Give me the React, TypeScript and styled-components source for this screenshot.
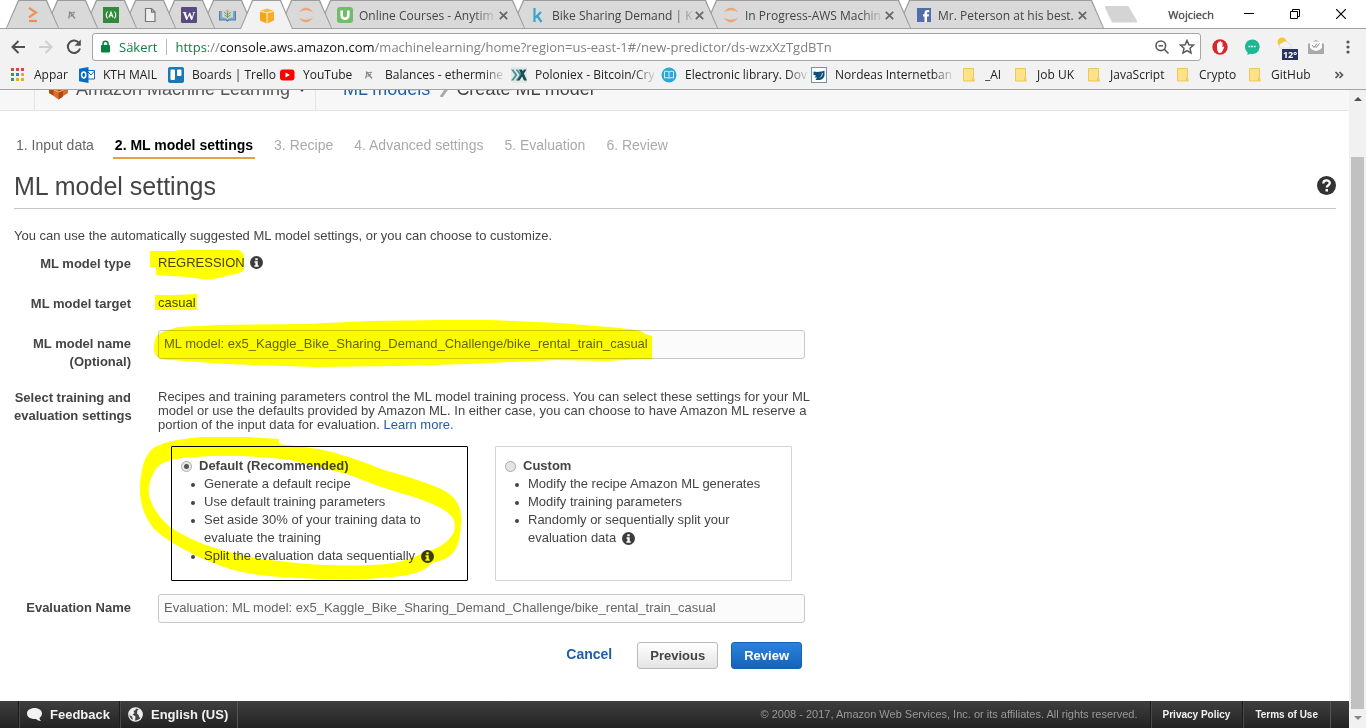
import React from "react";
import styled, { createGlobalStyle, css } from "styled-components";

const uiFont = `"Open Sans", "Noto Sans", sans-serif`;
const pageFont = `"Liberation Sans", Arial, sans-serif`;

const GlobalStyle = createGlobalStyle`
  * { box-sizing: border-box; }
  body { margin: 0; background: #fff; font-family: ${pageFont}; font-size: 13px; color: #444; }
  button { font: inherit; border: 0; background: none; padding: 0; cursor: pointer; }
  h1, p, ul { margin: 0; padding: 0; font-weight: normal; }
  svg { display: block; flex: none; }
`;

const Shell = styled.div`
  min-height: 100vh;
  display: flex;
  flex-direction: column;
`;

/* ---------- browser window ---------- */

const TabStrip = styled.div`
  display: flex;
  height: 29px;
  padding-left: 6px;
  border-bottom: 1px solid #a0a0a0;
  background: #fff;
  font-family: ${uiFont};
  font-size: 12px;
`;

const tabShape = (top: number) => css`
  clip-path: polygon(0 100%, 12px ${top}px, calc(100% - 12px) ${top}px, 100% 100%);
`;

const Tab = styled.div<{ $wide?: boolean; $active?: boolean; $order: number }>`
  position: relative;
  isolation: isolate;
  display: flex;
  align-items: center;
  justify-content: ${(p) => (p.$wide ? "flex-start" : "center")};
  gap: 2px;
  flex: none;
  width: ${(p) => (p.$wide ? 207 : 53)}px;
  height: ${(p) => (p.$active ? 29 : 28)}px;
  margin-right: -14px;
  padding: ${(p) => (p.$wide ? "2px 17px 0 19px" : "2px 0 0")};
  z-index: ${(p) => (p.$active ? 50 : 40 - p.$order)};
  color: #444;
  &::before {
    content: "";
    position: absolute;
    inset: 0;
    z-index: -2;
    background: #9c9c9c;
    ${tabShape(0)}
  }
  &::after {
    content: "";
    position: absolute;
    inset: 0 1px;
    z-index: -1;
    background: ${(p) => (p.$active ? "#f2f2f2" : "#d9d9d9")};
    ${tabShape(1)}
  }
`;

const Fade = styled.span<{ $on?: boolean }>`
  white-space: nowrap;
  ${(p) =>
    p.$on !== false &&
    css`
      mask-image: linear-gradient(to right, #000 calc(100% - 20px), rgba(0, 0, 0, 0.15));
    `}
`;

const TabTitle = styled(Fade)`
  margin-left: 4px;
`;

const IconButton = styled.button`
  display: flex;
  align-items: center;
  justify-content: center;
  flex: none;
`;

const CloseTab = styled(IconButton)`
  margin-left: auto;
`;

const NewTab = styled.button`
  align-self: center;
  width: 34px;
  height: 17px;
  margin-left: 14px;
  border-radius: 3px;
  background: #d4d4d4;
  clip-path: polygon(0 0, 24px 0, 100% 100%, 8px 100%);
`;

const WindowControls = styled.div`
  display: flex;
  align-items: center;
  margin-left: auto;
  padding-right: 2px;
`;

const UserName = styled.span`
  margin-right: 12px;
  font-size: 11px;
  color: #555;
  text-shadow: 0 0 1px #333;
`;

const ControlButton = styled(IconButton)`
  width: 46px;
  height: 27px;
`;

const Toolbar = styled.div`
  display: flex;
  align-items: center;
  height: 36px;
  padding: 4px 0 4px 9px;
  background: #f2f2f2;
  font-family: ${uiFont};
`;

const NavButtons = styled.div`
  display: flex;
  gap: 10px;
  margin-right: 9px;
`;

const Omnibox = styled.div`
  display: flex;
  align-items: center;
  flex: 1;
  height: 28px;
  padding: 0 4px 0 7px;
  border: 1px solid #a6a6a6;
  border-radius: 3px;
  background: #fff;
  font-size: 13px;
  white-space: nowrap;
`;

const Secure = styled.span`
  padding: 0 9px 0 8px;
  color: #0b8043;
  border-right: 1px solid #bbb;
  line-height: 16px;
`;

const Url = styled.span`
  flex: 1;
  padding-left: 8px;
  color: #808080;
  em { font-style: normal; color: #0b8043; }
  b { font-weight: normal; color: #111; }
`;

const Extensions = styled.div<{ $gap: number }>`
  display: flex;
  align-items: center;
  gap: ${(p) => p.$gap}px;
`;

const ExtensionBar = styled(Extensions)`
  padding: 0 14px 0 11px;
`;

const BookmarkBar = styled.nav`
  display: flex;
  align-items: center;
  height: 25px;
  padding-left: 10px;
  padding-right: 22px;
  padding-bottom: 5px;
  background: #f2f2f2;
  border-bottom: 1px solid #a3a3a3;
  font-family: ${uiFont};
  font-size: 12px;
`;

const Bookmark = styled.a<{ $width: number }>`
  display: flex;
  align-items: center;
  gap: 8px;
  flex: none;
  width: ${(p) => p.$width}px;
  color: #222;
  text-decoration: none;
  line-height: 18px;
`;

const More = styled.button`
  display: flex;
  margin-left: auto;
`;

/* ---------- page ---------- */

const Viewport = styled.div`
  display: flex;
  flex: 1;
`;

const Page = styled.div`
  display: flex;
  flex-direction: column;
  flex: 1;
  min-width: 0;
`;

const Scrollbar = styled.div`
  display: flex;
  flex-direction: column;
  align-items: center;
  width: 17px;
  padding: 5px 0 7px;
  background: #f1f1f1;
`;

const Thumb = styled.div`
  flex: 1;
  width: 13px;
  margin: 54px 0 7px;
  background: #c1c1c1;
`;

const ServiceBar = styled.header`
  display: flex;
  align-items: flex-end;
  height: 21px;
  overflow: hidden;
  background: #f7f7f7;
  border-bottom: 1px solid #e4e4e4;
  font-size: 18px;
  line-height: 42px;
`;

const Service = styled.div`
  display: flex;
  align-items: center;
  gap: 8px;
  width: 282px;
  height: 42px;
  margin-left: 34px;
  padding-left: 14px;
  border: solid #e4e4e4;
  border-width: 0 1px;
  color: #555;
  white-space: nowrap;
`;

const Crumbs = styled.div`
  display: flex;
  align-items: center;
  gap: 7px;
  height: 42px;
  padding-left: 27px;
  a { color: #1f5fa8; text-decoration: none; }
`;

const Main = styled.main`
  flex: 1;
  padding: 25px 13px 32px 14px;
`;

const Steps = styled.ol`
  display: flex;
  gap: 17px;
  margin: 0;
  padding: 0;
  list-style: none;
  font-size: 14px;
`;

const Step = styled.li<{ $state?: "done" | "current" }>`
  height: 23px;
  padding: 0 2px 5px;
  line-height: 18px;
  white-space: nowrap;
  color: ${(p) => (p.$state === "current" ? "#000" : p.$state === "done" ? "#666" : "#aaa")};
  font-weight: ${(p) => (p.$state === "current" ? "bold" : "normal")};
  border-bottom: 2px solid ${(p) => (p.$state === "current" ? "#e2a33a" : "transparent")};
`;

const TitleRow = styled.div`
  display: flex;
  align-items: center;
  justify-content: space-between;
  height: 50px;
  padding-top: 4px;
  border-bottom: 1px solid #c6c6c6;
  margin-bottom: 18px;
  h1 { font-size: 25px; line-height: 30px; }
`;

const Intro = styled.p`
  line-height: 18px;
  margin-bottom: 5px;
`;

const Row = styled.div<{ $space?: number }>`
  display: grid;
  grid-template-columns: 117px minmax(0, 647px);
  column-gap: 27px;
  margin-bottom: ${(p) => p.$space ?? 17}px;
`;

const Label = styled.label`
  padding-top: 5px;
  line-height: 18px;
  font-weight: bold;
  text-align: right;
  white-space: nowrap;
`;

const Value = styled.div`
  position: relative;
`;

const Plain = styled.div`
  display: flex;
  align-items: center;
  gap: 5px;
  height: 22px;
  padding-top: 3px;
`;

const TextInput = styled.input`
  display: block;
  width: 100%;
  height: 29px;
  padding: 0 5px 2px;
  border: 1px solid #c8c8c8;
  border-radius: 3px;
  background: #fbfbfb;
  font: 13px ${pageFont};
  color: #666;
`;

const Description = styled.p`
  padding-top: 6px;
  margin-bottom: 14px;
  line-height: 14px;
  white-space: nowrap;
  a { color: #1f5fa8; text-decoration: none; }
`;

const Cards = styled.div`
  display: grid;
  grid-template-columns: 1fr 1fr;
  gap: 27px;
  padding: 0 13px;
`;

const Card = styled.div<{ $selected?: boolean }>`
  min-height: 135px;
  padding: 10px 9px 9px;
  border: 1px solid ${(p) => (p.$selected ? "#000" : "#d5d5d5")};
  border-radius: 1px;
  line-height: 18px;
`;

const Option = styled.label`
  display: flex;
  align-items: center;
  gap: 7px;
  font-weight: bold;
`;

const Radio = styled.input`
  appearance: none;
  width: 11px;
  height: 11px;
  margin: 0;
  border: 1px solid #aaa;
  border-radius: 50%;
  background: #e4e4e4;
  &:checked {
    background: radial-gradient(circle, #555 0 2px, #e8e8e8 3px);
  }
`;

const Points = styled.ul`
  padding-left: 23px;
  list-style: none;
  li { position: relative; padding-right: 20px; }
  li::before {
    content: "";
    position: absolute;
    left: -13px;
    top: 8px;
    width: 4px;
    height: 4px;
    border-radius: 50%;
    background: #444;
  }
  svg { display: inline-block; vertical-align: -3px; margin-left: 2px; }
`;

const Actions = styled.div`
  display: flex;
  align-items: center;
  justify-content: flex-end;
  max-width: 788px;
  gap: 13px;
  font-weight: bold;
`;

const Cancel = styled.button`
  margin-right: 12px;
  padding-bottom: 3px;
  font-size: 14px;
  font-weight: bold;
  color: #1f5fa8;
`;

const Button = styled.button<{ $primary?: boolean }>`
  height: 27px;
  padding: 0 12px;
  font-weight: bold;
  border: 1px solid ${(p) => (p.$primary ? "#1762b0" : "#b9b9b9")};
  border-radius: 3px;
  color: ${(p) => (p.$primary ? "#fff" : "#444")};
  background: ${(p) =>
    p.$primary
      ? "linear-gradient(#2a83db, #1663b8)"
      : "linear-gradient(#ffffff, #e4e4e4)"};
`;

const Footer = styled.footer`
  display: flex;
  align-items: stretch;
  height: 27px;
  padding: 0 18px;
  background: linear-gradient(#3f3f3f, #222);
  color: #999;
  font-size: 11px;
  line-height: 26px;
`;

const FooterItem = styled.a<{ $small?: boolean }>`
  display: flex;
  align-items: center;
  gap: 8px;
  padding: ${(p) => (p.$small ? "0 12px" : "0 9px 0 8px")};
  border-left: 1px solid #1c1c1c;
  box-shadow: inset 1px 0 #4a4a4a;
  color: #f2f2f2;
  font-size: ${(p) => (p.$small ? 10 : 13)}px;
  font-weight: bold;
  text-decoration: none;
  white-space: nowrap;
  &:last-child { border-right: 1px solid #555; }
`;

const FooterGroup = styled.div`
  display: flex;
`;

const Copyright = styled.span`
  margin-left: auto;
  padding-right: 12px;
  white-space: nowrap;
`;

/* Marker strokes painted over the form; text stays readable through them. */
const Marker = styled.svg<{ $x: number; $y: number }>`
  position: absolute;
  left: ${(p) => p.$x}px;
  top: ${(p) => p.$y}px;
  mix-blend-mode: multiply;
  pointer-events: none;
`;

/* ---------- icons ---------- */

const Info = ({ size = 13 }: { size?: number }) => (
  <svg width={size} height={size} viewBox="0 0 13 13">
    <circle cx="6.5" cy="6.5" r="6.5" fill="#3c3c3c" />
    <path d="M5.3 2.3h2.4v2H5.3zM4.5 5.3h3.2v4h1v1.4H4.4V9.300h1V6.700h-.9z" fill="#fff" />
  </svg>
);

const Close = () => (
  <svg width="9" height="9" viewBox="0 0 9 9" stroke="#666" strokeWidth="1.7">
    <path d="M.8.8l7.400 7.400M8.200.8L.8 8.200" />
  </svg>
);

const Swirl = () => (
  <svg width="16" height="16" viewBox="0 0 16 16" fill="#f0a274">
    <path d="M1 5.500C4-.8 12-.8 15 5.500 11 2.600 5 2.600 1 5.500zM1 10.500c3 6.300 11 6.300 14 0-4 2.900-10 2.900-14 0z" />
  </svg>
);

const Pick = () => (
  <svg width="16" height="16" viewBox="0 0 16 16" fill="none" stroke="#8b8b8b">
    <path d="M4.500 11.500q1.500-3 1-6.500 3 1.500 5.500 0" strokeWidth="1.200" />
    <path d="M6 5.500l5 6M6.500 9.500L10 7" strokeWidth="1.400" />
  </svg>
);

const Letter = ({ bg, fg, ch, font = "Liberation Sans", size = 13, round = 1 }: { bg: string; fg: string; ch: string; font?: string; size?: number; round?: number }) => (
  <svg width="16" height="16" viewBox="0 0 16 16">
    <rect width="16" height="16" rx={round} fill={bg} />
    <text x="8" y="12.500" textAnchor="middle" fontFamily={font} fontWeight="bold" fontSize={size} fill={fg}>{ch}</text>
  </svg>
);

const Chevron = () => (
  <svg width="16" height="16" viewBox="0 0 16 16" fill="none" stroke="#ee9056" strokeWidth="2.200">
    <path d="M4 1l7 4.500-7 4.800" /><path d="M4 14h8" />
  </svg>
);

const GreenA = () => (
  <svg width="16" height="16" viewBox="0 0 16 16">
    <rect width="16" height="16" fill="#2f8a3b" />
    <g fill="none" stroke="#fff" strokeWidth="1.100">
      <path d="M4.500 4.500Q2 8 4.500 11.500M11.500 4.500Q14 8 11.500 11.500M6 10.500l2-5.500 2 5.500M6.700 8.800h2.600" />
    </g>
  </svg>
);

const Doc = () => (
  <svg width="16" height="16" viewBox="0 0 16 16" fill="#eee" stroke="#777" strokeWidth="1.200">
    <path d="M3.500 1.500h6l3.500 3.500v9.500h-9.500zM9.500 1.500v3.700H13" />
  </svg>
);

const Book = () => (
  <svg width="17" height="14" viewBox="0 0 17 14">
    <path d="M.5 3v9h6.500l1.500 1 1.500-1h6.500V3" fill="#7fa8c6" stroke="#4d83ac" strokeWidth="1.200" />
    <path d="M3 1.500c3 0 5 1 5.500 3v7c-1-1.500-3-2-5.500-2zM14 1.500c-3 0-5 1-5.500 3v7c1-1.500 3-2 5.500-2z" fill="#d3d3c6" />
    <path d="M8.500 10V4M8.500 7L5 4M8.500 7L12 4M8.500 9L5.500 7M8.500 9L11.500 7" stroke="#6d9a82" fill="none" />
    <circle cx="8.500" cy="3" r="1.200" fill="#d9a566" />
  </svg>
);

const Cube = ({ size = 16 }: { size?: number }) => (
  <svg width={size} height={size} viewBox="0 0 16 16">
    <path d="M1 3.500v9l6.700 3V5z" fill="#f3a61c" />
    <path d="M15 3.500v9l-6.700 3V5z" fill="#f5ae2a" />
    <path d="M1.300 2.800L8 .6l6.700 2.200L8 4.600z" fill="#f9bb3a" />
    <path d="M1 3.300l7 1.800 7-1.800M8 5v10.500" fill="none" stroke="#fde3a6" strokeWidth=".8" />
  </svg>
);

const MLCube = () => (
  <svg width="19" height="22" viewBox="0 0 19 22">
    <path d="M0 5l6-3 3.500 1.500L13 2l6 3v10l-4 2.500-5.500 4-5.500-4L0 15z" fill="#d86e2b" />
    <path d="M0 5l4.500 2v10.500L0 15zM9.500 10l4.500-2v10.500l-4.500 3z" fill="#a8491b" />
    <path d="M5 12l4.500 2 5-2M2 9l3 1M14 9l3-1" stroke="#f4b183" fill="none" />
  </svg>
);

const Kaggle = () => (
  <svg width="16" height="16" viewBox="0 0 16 16" fill="none" stroke="#3ba3cf" strokeWidth="2.200">
    <path d="M4.500 1v14M11 5l-5.500 5.500M7 8.500l4.500 6.500" />
  </svg>
);

const Udemy = () => (
  <svg width="16" height="16" viewBox="0 0 16 16">
    <rect width="16" height="16" rx="3" fill="#70bd69" />
    <path d="M4.700 3.500v5a3.300 3.300 0 006.600 0v-5" fill="none" stroke="#fff" strokeWidth="2.600" />
  </svg>
);

const Facebook = () => (
  <svg width="16" height="16" viewBox="0 0 16 16">
    <rect x="1" y="1" width="14" height="14" fill="#536da8" />
    <path d="M8.500 15V9.500H7V7.300h1.500V6c0-2 1-3 3-3h1.700v2.200H12c-.8 0-1 .3-1 1v1.100h2l-.3 2.200H11V15z" fill="#fff" />
  </svg>
);

const Folder = () => (
  <svg width="16" height="16" viewBox="0 0 16 16">
    <path d="M2.500 1.500h10v9l1 3.500h-11z" fill="#fde28a" stroke="#ecc75a" />
    <path d="M12 10l-1 4" stroke="#ecc75a" />
  </svg>
);

const Apps = () => (
  <svg width="16" height="16" viewBox="0 0 16 16">
    {["#d9483b", "#d9483b", "#d9483b", "#3b9a4f", "#3b78d8", "#e8a92b", "#3b9a4f", "#e8a92b", "#e8a92b"].map((c, i) => (
      <rect key={i} x={1 + (i % 3) * 5} y={1 + Math.floor(i / 3) * 5} width="3" height="3" fill={c} />
    ))}
  </svg>
);

const Outlook = () => (
  <svg width="16" height="16" viewBox="0 0 16 16">
    <path d="M8 3.500h7.500v8.500H8z" fill="#fff" stroke="#0a6cbc" />
    <path d="M8 4l4 4 3.500-4" fill="none" stroke="#0a6cbc" />
    <path d="M0 1.800L9.500 0v16L0 14.200z" fill="#0a6cbc" />
    <ellipse cx="4.700" cy="8" rx="2.100" ry="2.900" fill="none" stroke="#fff" strokeWidth="1.500" />
  </svg>
);

const Trello = () => (
  <svg width="16" height="16" viewBox="0 0 16 16">
    <rect width="16" height="16" rx="2" fill="#1779b5" />
    <rect x="2.500" y="2.500" width="4.500" height="10.500" rx="1" fill="#fff" />
    <rect x="9" y="2.500" width="4.500" height="6.500" rx="1" fill="#fff" />
  </svg>
);

const YouTube = () => (
  <svg width="16" height="16" viewBox="0 0 16 16">
    <rect x="1" y="2.500" width="14.500" height="11" rx="3" fill="#f00" />
    <path d="M6.500 5.500v5l4.500-2.500z" fill="#fff" />
  </svg>
);

const Poloniex = () => (
  <svg width="16" height="16" viewBox="0 0 16 16">
    <rect width="16" height="16" fill="#e3e8e8" />
    <path d="M0 2.500h2.500l4 5.500-4 5.500H0L4 8zM4.500 2.500H7L11 8l-4 5.500H4.500L8.500 8z" fill="#4c9a94" />
    <path d="M8 2.500h3l5 11h-3zM13 2.500h2.500L8.500 13.500H6z" fill="#174f55" />
  </svg>
);

const Library = () => (
  <svg width="16" height="16" viewBox="0 0 16 16">
    <circle cx="8" cy="8" r="7.500" fill="#2ca7d8" />
    <path d="M3.500 4.500c2-.5 3.500-.3 4.500.5 1-.8 2.500-1 4.500-.5v6.500c-2-.5-3.500-.3-4.500.3-1-.6-2.500-.8-4.500-.3zM8 5v6" fill="none" stroke="#d8f1fa" />
  </svg>
);

const Nordea = () => (
  <svg width="16" height="16" viewBox="0 0 16 16">
    <rect x=".5" y=".5" width="15" height="15" fill="#fff" stroke="#6b93aa" />
    <path d="M2.500 4.500c3 .8 8 .5 11-1v5.500q-2 4-5 4H4.500l1.500-2.500H3.500L5 8.500 2.500 8z" fill="#0f4f7c" />
    <path d="M9 10.500q2-1 2.500-4.500" stroke="#fff" fill="none" strokeWidth=".8" />
  </svg>
);

/* ---------- content ---------- */

const smallTabs = [
  { name: "Console", icon: <Chevron /> },
  { name: "Ethermine", icon: <Pick /> },
  { name: "Academy", icon: <GreenA /> },
  { name: "Document", icon: <Doc /> },
  { name: "Wikipedia", icon: <Letter bg="#5b4a80" fg="#fff" ch="W" font="Liberation Serif" /> },
  { name: "Library", icon: <Book /> },
  { name: "AWS", icon: <Cube />, active: true },
  { name: "Jupyter", icon: <Swirl /> },
];

const wideTabs = [
  { title: "Online Courses - Anytim", icon: <Udemy />, fade: true },
  { title: "Bike Sharing Demand | K", icon: <Kaggle />, fade: true },
  { title: "In Progress-AWS Machin", icon: <Swirl />, fade: true },
  { title: "Mr. Peterson at his best.", icon: <Facebook />, fade: false },
];

const bookmarks = [
  { label: "Appar", icon: <Apps />, width: 69 },
  { label: "KTH MAIL", icon: <Outlook />, width: 89 },
  { label: "Boards | Trello", icon: <Trello />, width: 111 },
  { label: "YouTube", icon: <YouTube />, width: 82 },
  { label: "Balances - ethermine", icon: <Pick />, width: 150, fade: true },
  { label: "Poloniex - Bitcoin/Cry", icon: <Poloniex />, width: 150, fade: true },
  { label: "Electronic library. Dov", icon: <Library />, width: 150, fade: true },
  { label: "Nordeas Internetban", icon: <Nordea />, width: 150, fade: true },
  { label: "_AI", icon: <Folder />, width: 52 },
  { label: "Job UK", icon: <Folder />, width: 73 },
  { label: "JavaScript", icon: <Folder />, width: 89 },
  { label: "Crypto", icon: <Folder />, width: 72 },
  { label: "GitHub", icon: <Folder />, width: 74 },
];

const steps: { text: string; state?: "done" | "current" }[] = [
  { text: "1. Input data", state: "done" },
  { text: "2. ML model settings", state: "current" },
  { text: "3. Recipe" },
  { text: "4. Advanced settings" },
  { text: "5. Evaluation" },
  { text: "6. Review" },
];

const BrowserChrome = () => (
  <>
    <TabStrip>
      {smallTabs.map((t, i) => (
        <Tab key={t.name} $order={i} $active={t.active}>{t.icon}</Tab>
      ))}
      {wideTabs.map((t, i) => (
        <Tab key={t.title} $order={smallTabs.length + i} $wide>
          {t.icon}
          <TabTitle $on={t.fade}>{t.title}</TabTitle>
          <CloseTab aria-label="Close tab"><Close /></CloseTab>
        </Tab>
      ))}
      <NewTab aria-label="New tab" />
      <WindowControls>
        <UserName>Wojciech</UserName>
        <ControlButton aria-label="Minimize">
          <svg width="10" height="10" viewBox="0 0 10 10"><path d="M0 4.500h10" stroke="#000" /></svg>
        </ControlButton>
        <ControlButton aria-label="Restore">
          <svg width="10" height="10" viewBox="0 0 10 10" fill="none" stroke="#000"><path d="M.5 2.500h7v7h-7zM2.500 2.500v-2h7v7h-2" /></svg>
        </ControlButton>
        <ControlButton aria-label="Close">
          <svg width="10" height="10" viewBox="0 0 10 10" stroke="#000" strokeWidth="1.200"><path d="M0 0l10 10M10 0L0 10" /></svg>
        </ControlButton>
      </WindowControls>
    </TabStrip>
    <Toolbar>
      <NavButtons>
        <IconButton aria-label="Back">
          <svg width="18" height="18" viewBox="0 0 18 18" fill="none" stroke="#505050" strokeWidth="2"><path d="M16 9H3.500M9.500 3L3.500 9l6 6" /></svg>
        </IconButton>
        <IconButton aria-label="Forward">
          <svg width="18" height="18" viewBox="0 0 18 18" fill="none" stroke="#cfcfcf" strokeWidth="2"><path d="M2 9h12.500M8.500 3l6 6-6 6" /></svg>
        </IconButton>
        <IconButton aria-label="Reload">
          <svg width="18" height="18" viewBox="0 0 18 18"><path d="M14.200 5.200A6.200 6.200 0 1015 10.500" fill="none" stroke="#505050" strokeWidth="2" /><path d="M15.800 1.500v6.300H9.500z" fill="#505050" /></svg>
        </IconButton>
      </NavButtons>
      <Omnibox>
        <svg width="11" height="14" viewBox="0 0 11 14"><path d="M1.500 5.500h8v6.500h-8z" fill="#0b8043" stroke="#0b8043" /><path d="M3 5V3.800a2.500 2.500 0 015 0V5" fill="none" stroke="#0b8043" strokeWidth="1.500" /></svg>
        <Secure>Säkert</Secure>
        <Url><em>https</em>://<b>console.aws.amazon.com</b>/machinelearning/home?region=us-east-1#/new-predictor/ds-wzxXzTgdBTn</Url>
        <IconButton aria-label="Zoom">
          <svg width="16" height="16" viewBox="0 0 16 16" fill="none" stroke="#5a5a5a" strokeWidth="1.600"><circle cx="6.800" cy="6.800" r="4.800" /><path d="M10.300 10.300l4.200 4.200M4.500 6.800h4.600" /></svg>
        </IconButton>
        <IconButton aria-label="Bookmark this page">
          <svg width="26" height="16" viewBox="-9 0 26 16" fill="none" stroke="#5a5a5a" strokeWidth="1.500"><path d="M8 1.500l1.900 4.300 4.600.4-3.500 3.100 1 4.600-4-2.400-4 2.400 1-4.600L1.500 6.200l4.600-.4z" /></svg>
        </IconButton>
      </Omnibox>
      <ExtensionBar $gap={16}>
        <svg width="16" height="16" viewBox="0 0 16 16">
          <circle cx="8" cy="8" r="7.700" fill="#d8262c" />
          <path d="M5 8V4.500q.8-.7 1.200 0V3q.8-.8 1.400 0v-.5q.8-.8 1.500 0V3.500q.8-.6 1.400 0v5l1-1q1 0 .7.800L10.500 12q-1 2-2.500 2-3 0-3-6z" fill="#fff" />
        </svg>
        <svg width="16" height="16" viewBox="0 0 16 16">
          <path d="M8 .5a7.300 7.300 0 11-2 14.200L3.500 16v-2.700A7.300 7.300 0 018 .5z" fill="#1cb894" />
          <path d="M4.500 7.500h1.700M7.200 7.500h1.700M9.900 7.500h1.700" stroke="#fff" strokeWidth="1.500" />
        </svg>
        <Extensions $gap={10}>
          <svg width="22" height="26" viewBox="0 -2 22 26">
            <circle cx="6" cy="6" r="4.500" fill="#f8c534" />
            <path d="M4 12a3 3 0 012-5 4 4 0 017 1 2.500 2.500 0 012 4z" fill="#f5f5f5" stroke="#ccc" strokeWidth=".5" />
            <rect x="6" y="13" width="16" height="11" fill="#27335f" />
            <text x="14" y="22" textAnchor="middle" fontFamily="Open Sans" fontSize="9" fontWeight="bold" fill="#fff">12°</text>
          </svg>
          <svg width="16" height="14" viewBox="0 0 16 14">
            <path d="M0 4l8-4 8 4v10H0z" fill="#a9a9a9" />
            <path d="M2 1.500h12V8q-6 6-12 0z" fill="#fafafa" />
            <path d="M4 5l2 2.500L9 3.500M7.500 6.500l.8 1L11.500 3.500" stroke="#888" fill="none" />
          </svg>
          <IconButton aria-label="Menu">
            <svg width="18" height="16" viewBox="0 0 18 16" fill="#555"><circle cx="14" cy="3" r="1.600" /><circle cx="14" cy="8" r="1.600" /><circle cx="14" cy="13" r="1.600" /></svg>
          </IconButton>
        </Extensions>
      </ExtensionBar>
    </Toolbar>
    <BookmarkBar>
      {bookmarks.map((b) => (
        <Bookmark key={b.label} href="#" $width={b.width}>
          {b.icon}
          <Fade $on={!!b.fade}>{b.label}</Fade>
        </Bookmark>
      ))}
      <More aria-label="More bookmarks">
        <svg width="10" height="8" viewBox="0 0 10 8" fill="none" stroke="#555" strokeWidth="1.700"><path d="M1.500 1l3 3-3 3M5.500 1l3 3-3 3" /></svg>
      </More>
    </BookmarkBar>
  </>
);

const SettingsForm = () => (
  <form>
    <Row>
      <Label as="div">ML model type</Label>
      <Value>
        <Plain>REGRESSION <Info /></Plain>
        <Marker $x={-8} $y={0} width="94" height="30" viewBox="0 0 94 30">
          <path d="M0 1h24L30 0h58q4 1 6 5v15q-4 4-14 5-14 5-28 4-16-3-33-3L6 25V17H0z" fill="#ff0" />
        </Marker>
      </Value>
    </Row>
    <Row>
      <Label as="div">ML model target</Label>
      <Value>
        <Plain>casual</Plain>
        <Marker $x={-3} $y={4} width="43" height="17" viewBox="0 0 43 17">
          <path d="M0 1h20L42 0v16H0z" fill="#ff0" />
        </Marker>
      </Value>
    </Row>
    <Row $space={13}>
      <Label htmlFor="model-name">ML model name<br />(Optional)</Label>
      <Value>
        <TextInput id="model-name" defaultValue="ML model: ex5_Kaggle_Bike_Sharing_Demand_Challenge/bike_rental_train_casual" />
        <Marker $x={-4} $y={-12} width="504" height="50" viewBox="154 318 504 50">
          <path d="M155 340q1-6 10-9l13-4 42-2 85-1 65-3 70-1 50 0 70 3 60 5 16 2q7 1 9 4l7 2v23h-6l-40 2-50-1-90 4-70 2-80 1-90-3-55-4q-13 0-16-6-2-6 0-14z" fill="#ff0" />
        </Marker>
      </Value>
    </Row>
    <Row $space={13}>
      <Label as="div" id="settings-label">Select training and<br />evaluation settings</Label>
      <Value>
        <Description>
          Recipes and training parameters control the ML model training process. You can select these settings for your ML<br />
          model or use the defaults provided by Amazon ML. In either case, you can choose to have Amazon ML reserve a<br />
          portion of the input data for evaluation. <a href="#">Learn more.</a>
        </Description>
        <Cards role="radiogroup" aria-labelledby="settings-label">
          <Card $selected>
            <Option><Radio type="radio" name="settings" defaultChecked />Default (Recommended)</Option>
            <Points>
              <li>Generate a default recipe</li>
              <li>Use default training parameters</li>
              <li>Set aside 30% of your training data to evaluate the training</li>
              <li>Split the evaluation data sequentially <Info /></li>
            </Points>
          </Card>
          <Card>
            <Option><Radio type="radio" name="settings" />Custom</Option>
            <Points>
              <li>Modify the recipe Amazon ML generates</li>
              <li>Modify training parameters</li>
              <li>Randomly or sequentially split your evaluation data <Info /></li>
            </Points>
          </Card>
        </Cards>
        <Marker $x={-18} $y={53} width="322" height="143" viewBox="140 437 322 143">
          <path
            fillRule="evenodd"
            d="M152 449q12-9 50-12h46l31 2v5l40 5q28 6 65 21 30 8 55 18 18 8 21 22 3 8-1 30-4 16-17 20l-10 3q-10 12-40 14-40 4-95 1-40-2-60-7-18-5-38-14-30-14-45-28-14-18-14-38 0-30 12-42zM171 460q-14 4-17 12-8 16-4 27 5 15 20 28 22 14 42 20 30 10 66 14 50 6 95 4 32-1 51-13 20-4 29-18 3-6 1-14-6-12-40-23-36-10-64-22-30-8-60-15-42-5-75-4-34 1-44 4z"
            fill="#ff0"
          />
        </Marker>
      </Value>
    </Row>
    <Row $space={19}>
      <Label htmlFor="evaluation-name">Evaluation Name</Label>
      <Value>
        <TextInput id="evaluation-name" defaultValue="Evaluation: ML model: ex5_Kaggle_Bike_Sharing_Demand_Challenge/bike_rental_train_casual" />
      </Value>
    </Row>
    <Actions>
      <Cancel type="button">Cancel</Cancel>
      <Button type="button">Previous</Button>
      <Button type="button" $primary>Review</Button>
    </Actions>
  </form>
);

export default function App() {
  return (
    <Shell>
      <GlobalStyle />
      <BrowserChrome />
      <Viewport>
        <Page>
          <ServiceBar>
            <Service>
              <MLCube />
              Amazon Machine Learning
              <svg width="8" height="5" viewBox="0 0 8 5"><path d="M0 0h8L4 5z" fill="#333" /></svg>
            </Service>
            <Crumbs>
              <a href="#">ML models</a>
              <svg width="12" height="16" viewBox="0 0 12 16" fill="none" stroke="#aaa" strokeWidth="3"><path d="M4 2l5 7-5 7" /></svg>
              <span>Create ML model</span>
            </Crumbs>
          </ServiceBar>
          <Main>
            <Steps>
              {steps.map((s) => (
                <Step key={s.text} $state={s.state}>{s.text}</Step>
              ))}
            </Steps>
            <TitleRow>
              <h1>ML model settings</h1>
              <IconButton aria-label="Help">
                <svg width="19" height="19" viewBox="0 0 19 19">
                  <circle cx="9.500" cy="9.500" r="9.500" fill="#333" />
                  <path d="M6.300 7.500c0-4 6.500-4 6.500-.4 0 2.200-3 2.200-3 4.500" fill="none" stroke="#fff" strokeWidth="2.300" />
                  <rect x="8.500" y="13" width="2.500" height="2.500" fill="#fff" />
                </svg>
              </IconButton>
            </TitleRow>
            <Intro>You can use the automatically suggested ML model settings, or you can choose to customize.</Intro>
            <SettingsForm />
          </Main>
          <Footer>
            <FooterGroup>
              <FooterItem href="#">
                <svg width="15" height="15" viewBox="0 0 15 15"><path d="M7.500 1C11.600 1 15 3.300 15 6.500c0 2-1 3.300-2.500 4.300 0 1.500.8 2.500 1.500 3.200-2 0-3.800-.8-5-2C3.500 12.300 0 10 0 6.500 0 3.300 3.400 1 7.500 1z" fill="#f2f2f2" /></svg>
                Feedback
              </FooterItem>
              <FooterItem href="#">
                <svg width="15" height="15" viewBox="0 0 15 15">
                  <circle cx="7.500" cy="7.500" r="6.700" fill="#444" stroke="#eee" strokeWidth="1.300" />
                  <path d="M1 5l3-3.500 4-.5-.5 2-2 1 1 2-2 1.500 3 2-.5 4.500-2-1-1-3.500L1.500 8zM9.500 3l3-.5 2 4.500-1 4-2-.5-1-2.500-1.500-1.500z" fill="#eee" />
                </svg>
                English (US)
              </FooterItem>
            </FooterGroup>
            <Copyright>© 2008 - 2017, Amazon Web Services, Inc. or its affiliates. All rights reserved.</Copyright>
            <FooterGroup>
              <FooterItem href="#" $small>Privacy Policy</FooterItem>
              <FooterItem href="#" $small>Terms of Use</FooterItem>
            </FooterGroup>
          </Footer>
        </Page>
        <Scrollbar aria-hidden="true">
          <svg width="8" height="8" viewBox="0 0 8 8"><path d="M0 6l4-4 4 4z" fill="#505050" /></svg>
          <Thumb />
          <svg width="8" height="5" viewBox="0 0 8 5"><path d="M0 0l4 4 4-4z" fill="#888" /></svg>
        </Scrollbar>
      </Viewport>
    </Shell>
  );
}
